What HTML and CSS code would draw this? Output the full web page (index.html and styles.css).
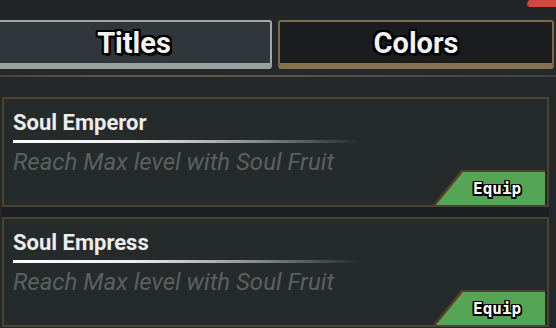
FILE: index.html
```html
<!DOCTYPE html>
<html lang="en">
<head>
    <meta charset="UTF-8">
    <meta name="viewport" content="width=device-width, initial-scale=1.0">
    <title>Titles</title>
    <link rel="stylesheet" href="styles.css">
</head>
<body>
    <div class="screen">
        <div class="close-corner"></div>
        <nav class="tabs">
            <button class="tab tab-active">Titles</button>
            <button class="tab">Colors</button>
        </nav>
        <div class="divider"></div>
        <ul class="title-list">
            <li class="title-card">
                <h3 class="title-name">Soul Emperor</h3>
                <div class="title-rule"></div>
                <p class="title-desc">Reach Max level with Soul Fruit</p>
                <button class="equip-btn"><span>Equip</span></button>
            </li>
            <li class="title-card">
                <h3 class="title-name">Soul Empress</h3>
                <div class="title-rule"></div>
                <p class="title-desc">Reach Max level with Soul Fruit</p>
                <button class="equip-btn"><span>Equip</span></button>
            </li>
        </ul>
    </div>
</body>
</html>
```

FILE: styles.css
```css
body {
    margin: 0;
    background-color: #242829;
    font-family: Roboto, "Liberation Sans", sans-serif;
    overflow: hidden;
}
.screen {
    position: relative;
    height: 328px;
    padding: 20px 7px 0 2px;
    box-sizing: border-box;
    background: linear-gradient(#212425 0, #222627 20px, #242829 70px);
}
.close-corner {
    position: absolute;
    top: -4px;
    right: -16px;
    width: 44px;
    height: 11px;
    background-color: #d8443f;
    border-radius: 0 0 0 6px;
    transform: skewX(-35deg);
}

/* tabs */
.tabs {
    display: flex;
    gap: 6px;
    margin-left: -6px;
    margin-right: -5px;
}
.tab {
    flex: 1;
    height: 49px;
    box-sizing: border-box;
    border: 2px solid #7b6b4c;
    border-bottom: 6px solid #85714f;
    border-radius: 3px;
    background-color: #1a1c1d;
    color: #f2f2f2;
    font-family: Roboto, sans-serif;
    font-weight: bold;
    font-size: 29px;
    padding: 0;
    text-shadow: 2px 0 0 #000, -2px 0 0 #000, 0 2px 0 #000, 0 -2px 0 #000,
                 2px 2px 0 #000, -2px 2px 0 #000, 2px -2px 0 #000, -2px -2px 0 #000,
                 2px 3px 1px #000;
}
.tab-active {
    background-color: #30373a;
    border-color: #a2a7a8;
    border-bottom-color: #9a9fa0;
}

.divider {
    height: 2px;
    margin: 6px -7px 0 -2px;
    background: linear-gradient(90deg, #4a463b 0%, #5d5a4c 25%, #55544e 50%, #3e4448 100%);
}

/* title cards */
.title-list {
    list-style: none;
    margin: 20px 0 0;
    padding: 0;
    display: flex;
    flex-direction: column;
    gap: 10px;
}
.title-card {
    position: relative;
    height: 110px;
    box-sizing: border-box;
    border: 2px solid #4a4332;
    background-color: #252a2b;
    padding: 12px 9px 0;
}
.title-list .title-card + .title-card {
    box-shadow: 0 -10px 0 #1d1f23;
}
.title-name {
    margin: 0;
    font-size: 22px;
    line-height: 24px;
    font-weight: bold;
    color: #ededed;
}
.title-rule {
    width: 347px;
    height: 3px;
    margin-top: 5px;
    background: linear-gradient(90deg, #ffffff 0%, #eeeeee 35%, #9a9c9c 65%, rgba(90, 95, 96, 0) 100%);
}
.title-desc {
    margin: 5px 0 0;
    font-size: 24px;
    line-height: 28px;
    font-style: italic;
    color: #5b6061;
}
.equip-btn {
    position: absolute;
    right: 2px;
    bottom: 0;
    width: 112px;
    height: 35px;
    border: none;
    padding: 0;
    background-color: #5b3c2b;
    clip-path: polygon(28px 0, 100% 0, 100% 100%, 0 100%);
    cursor: pointer;
}
.equip-btn::before {
    content: "";
    position: absolute;
    inset: 2px 0 0 3px;
    background-color: #56a557;
    clip-path: polygon(27px 0, 100% 0, 100% 100%, 0 100%);
}
.equip-btn span {
    position: relative;
    display: block;
    padding-left: 40px;
    padding-top: 2px;
    font-family: "DejaVu Sans Mono", monospace;
    font-weight: bold;
    font-size: 16px;
    color: #fff;
    text-align: left;
    text-shadow: 1.5px 0 0 #000, -1.5px 0 0 #000, 0 1.5px 0 #000, 0 -1.5px 0 #000,
                 1.5px 1.5px 0 #000, -1.5px 1.5px 0 #000, 1.5px -1.5px 0 #000, -1.5px -1.5px 0 #000;
}
```
